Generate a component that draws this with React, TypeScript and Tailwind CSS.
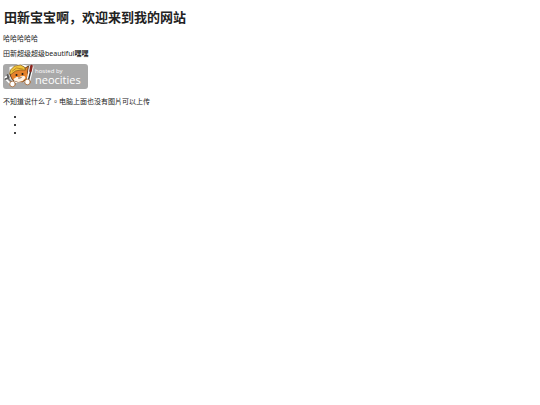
const items = [1, 2, 3]

// neocities cat with a wrench and a brush
const Cat = () => (
  <g strokeLinecap="round" strokeLinejoin="round">
    <path
      d="M6 9 6 3l5-1 4-2 6 1 5 1-1 6 1 4-3 5-5 2-6 0-5-4-1-4z"
      fill="#fff"
    />
    <path d="M3 14l5 5" stroke="#fff" strokeWidth="4" />
    <path d="M4 11l1 3-3 1M4 14l5 5" stroke="#5a5a5a" strokeWidth="1.8" fill="none" />
    <path d="M5 15l4 4" stroke="#ccc" strokeWidth="0.7" />
    <path
      d="M7 8l0 4 2 4 5 2 5 0 4-3 2-4-1-3 1-6-5 3-8 0z"
      fill="#e5822b"
      stroke="#5c3517"
      strokeWidth="0.9"
    />
    <path d="M10 15l3-2 3 0 2-1 3 0 1 2-3 3-4 1-4-1z" fill="#fff3e4" />
    <path
      d="M6 10 7 6l4-4 6-1 4 2 1 3-5 0-5 1-4 3z"
      fill="#f0c43c"
      stroke="#80571c"
      strokeWidth="0.7"
    />
    <path d="M9 7l4-3 6 1" stroke="#b07a1c" strokeWidth="0.8" fill="none" />
    <circle cx="13" cy="11" r="1" fill="#1c1c1c" />
    <circle cx="19" cy="10" r="1" fill="#1c1c1c" />
    <path d="M15 14l2 0 1-1" stroke="#5c3517" strokeWidth="0.8" fill="none" />
    <path d="M28 3l-3 13" stroke="#fff" strokeWidth="4" />
    <path d="M27 8l-2 8" stroke="#333" strokeWidth="1.4" />
    <path d="M28 2l-1 5" stroke="#8a241d" strokeWidth="2.6" />
    <circle cx="9" cy="20" r="2.8" fill="#fff" stroke="#a5652d" strokeWidth="0.8" />
    <circle cx="24" cy="18" r="2.8" fill="#fff" stroke="#a5652d" strokeWidth="0.8" />
  </g>
)

const NeocitiesBadge = () => (
  <span className="flex w-[85px] h-[25px] rounded-[3px] bg-[#a9a9a9]">
    <svg viewBox="0 0 31 25" className="flex-none w-8 h-[25px]" aria-hidden="true">
      <Cat />
    </svg>
    <span className="flex flex-col pt-1 text-white font-['Open_Sans',sans-serif]">
      <span className="text-[6px] leading-[6px]">hosted by</span>
      <span className="text-[11px] leading-[11px]">neocities</span>
    </span>
  </span>
)

export default function App() {
  return (
    <main className="flex flex-col items-start px-[3px] pt-2 bg-white text-[#222] text-[7px] leading-[8px] font-['Noto_Sans','Noto_Sans_CJK_SC',sans-serif]">
      <h1 className="pl-px text-[13px] leading-[18px] font-bold">
        田新宝宝啊，欢迎来到我的网站
      </h1>
      <p className="mt-[9px]">哈哈哈哈哈</p>
      <p className="mt-[7px]">
        田新超级超级beautiful<strong>嘿嘿</strong>
      </p>
      <a href="#" className="mt-[6px]">
        <NeocitiesBadge />
      </a>
      <p className="mt-2 font-['Noto_Sans_CJK_TC','Noto_Sans_CJK_SC',sans-serif]">
        不知道说什么了。电脑上面也没有图片可以上传
      </p>
      <ul className="mt-2 pl-[22px] list-disc text-black">
        {items.map(item => (
          <li key={item} />
        ))}
      </ul>
    </main>
  )
}
